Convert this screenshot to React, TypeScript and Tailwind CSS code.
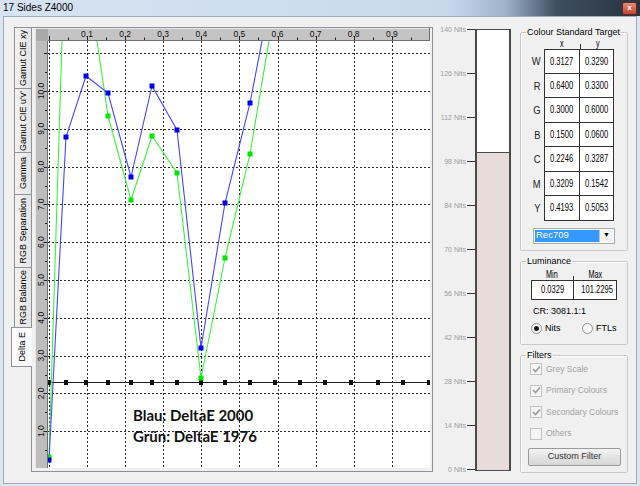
import React from "react";

const TABS = [
  { label: "Gamut CIE xy", h: "h-[62px]" },
  { label: "Gamut CIE u'v'", h: "h-[65px]" },
  { label: "Gamma", h: "h-[43px]" },
  { label: "RGB Separation", h: "h-[74px]" },
  { label: "RGB Balance", h: "h-[61px]" },
];

const TARGET = [
  ["W", "0.3127", "0.3290"],
  ["R", "0.6400", "0.3300"],
  ["G", "0.3000", "0.6000"],
  ["B", "0.1500", "0.0600"],
  ["C", "0.2246", "0.3287"],
  ["M", "0.3209", "0.1542"],
  ["Y", "0.4193", "0.5053"],
];

const NITS = [140, 126, 112, 98, 84, 70, 56, 42, 28, 14, 0];

const PX = [49, 66, 86, 108, 131, 152, 177, 201, 225, 250, 275, 300, 325, 351, 378, 403, 429];
const BLUE = [460, 137, 76, 93, 177, 86, 130, 348, 203, 103, -26];
const GREEN = [457, -87, -34, 116, 200, 136, 173, 378, 258, 154, 5];

const gx = (v: number) => 48.9 + v * 381;
const gy = (v: number) => 469 - v * 37.8;

function pts(ys: number[]) {
  return ys.map((y, i) => `${PX[i]},${y}`).join(" ");
}

// narrow text, the app uses a condensed face for numbers
function N({ children, right }: { children: React.ReactNode; right?: boolean }) {
  return (
    <span className={`inline-block shrink-0 whitespace-nowrap scale-x-[0.66] ${right ? "origin-right" : "origin-center"}`}>
      {children}
    </span>
  );
}

function Chart() {
  const xs = [0, 1, 2, 3, 4, 5, 6, 7, 8, 9];
  const ys = [1, 2, 3, 4, 5, 6, 7, 8, 9, 10, 11];
  return (
    <svg width={395} height={440} viewBox="35 28 395 440" className="block">
      <defs>
        <clipPath id="plot">
          <rect x={48} y={41} width={382} height={427} />
        </clipPath>
      </defs>
      {/* rulers */}
      <rect x={35} y={28} width={395} height={13} fill="#c4c4c4" />
      <rect x={35} y={28} width={13} height={440} fill="#bdbdbd" />
      <rect x={35} y={28} width={13} height={13} fill="#a9a9a9" />
      <line x1={35} y1={28.5} x2={430} y2={28.5} stroke="#e6e6e6" />
      <line x1={35.5} y1={28} x2={35.5} y2={468} stroke="#e6e6e6" />
      <line x1={48} y1={40.5} x2={430} y2={40.5} stroke="#6f6f6f" />
      <line x1={47.5} y1={41} x2={47.5} y2={468} stroke="#6f6f6f" />
      <line x1={429.5} y1={28} x2={429.5} y2={41} stroke="#6f6f6f" />
      <rect x={48} y={41} width={382} height={427} fill="#fff" />
      {xs.map((k) => (
        <g key={"xt" + k}>
          <line x1={Math.round(gx(k / 10)) + 0.5} y1={36} x2={Math.round(gx(k / 10)) + 0.5} y2={40} stroke="#222" />
          <line x1={Math.round(gx(k / 10 + 0.05)) + 0.5} y1={37.5} x2={Math.round(gx(k / 10 + 0.05)) + 0.5} y2={40} stroke="#222" />
          {k > 0 && (
            <text x={gx(k / 10)} y={37} fontSize={8.5} textAnchor="middle" fontFamily="Liberation Sans, sans-serif" fill="#111">
              {`0.${k}`}
            </text>
          )}
        </g>
      ))}
      {ys.map((k) => (
        <g key={"yt" + k}>
          <line x1={44} y1={Math.round(gy(k)) + 0.5} x2={47} y2={Math.round(gy(k)) + 0.5} stroke="#222" />
          <line x1={45} y1={Math.round(gy(k - 0.5)) + 0.5} x2={47} y2={Math.round(gy(k - 0.5)) + 0.5} stroke="#222" />
          {k <= 10 && (
            <text
              x={0}
              y={0}
              fontSize={8.5}
              textAnchor="middle"
              fontFamily="Liberation Sans, sans-serif"
              fill="#111"
              transform={`translate(44 ${gy(k)}) rotate(-90)`}
            >
              {`${k}.0`}
            </text>
          )}
        </g>
      ))}
      {/* grid */}
      <g stroke="#2a2a2a" strokeDasharray="2 2" shapeRendering="crispEdges">
        {xs.map((k) => (
          <line key={"gx" + k} x1={Math.round(gx(k / 10)) + 0.5} y1={41} x2={Math.round(gx(k / 10)) + 0.5} y2={468} />
        ))}
        {ys.map((k) => (
          <line key={"gy" + k} x1={48} y1={Math.round(gy(k)) + 0.5} x2={430} y2={Math.round(gy(k)) + 0.5} />
        ))}
      </g>
      <g clipPath="url(#plot)">
        <line x1={48} y1={382.5} x2={430} y2={382.5} stroke="#222" />
        {PX.map((x) => (
          <rect key={"k" + x} x={x - 2} y={380} width={4} height={5} fill="#111" />
        ))}
        <polyline points={pts(GREEN)} fill="none" stroke="#3cf43c" strokeWidth={1.1} />
        <polyline points={pts(BLUE)} fill="none" stroke="#4646ff" strokeWidth={1.1} />
        {GREEN.map((y, i) => (
          <rect key={"g" + i} x={PX[i] - 2.5} y={y - 2.5} width={5} height={5} fill="#00e600" />
        ))}
        {BLUE.map((y, i) => (
          <rect key={"b" + i} x={PX[i] - 2.5} y={y - 2.5} width={5} height={5} fill="#0000e8" />
        ))}
      </g>
      <text x={133} y={421} fontSize={15} fontWeight={700} fontFamily="Lato, sans-serif" fill="#111">
        Blau: DeltaE 2000
      </text>
      <text x={133} y={442} fontSize={15} fontWeight={700} fontFamily="Lato, sans-serif" fill="#111">
        Grün: DeltaE 1976
      </text>
    </svg>
  );
}

function Check({ on }: { on: boolean }) {
  return (
    <span className="flex h-[12px] w-[12px] items-center justify-center border border-[#c2c2c2] bg-[#f4f4f4]">
      {on && (
        <svg width="9" height="9" viewBox="0 0 9 9">
          <polyline points="1,4 3.5,6.5 8,1.5" fill="none" stroke="#9a9a9a" strokeWidth="1.6" />
        </svg>
      )}
    </span>
  );
}

function Radio({ on }: { on: boolean }) {
  return (
    <span className="flex h-[11px] w-[11px] items-center justify-center rounded-full border border-[#8e8f8f] bg-[#f6f6f6]">
      {on && <span className="h-[5px] w-[5px] rounded-full bg-[#1a1a1a]" />}
    </span>
  );
}

export default function App() {
  const fill = (101.2295 / 140) * 440;
  return (
    <div className="flex h-[486px] w-[640px] flex-col overflow-hidden bg-[#dce6f2] font-['Liberation_Sans',sans-serif] text-[9px] text-black">
      <div className="flex h-[16px] items-center justify-between bg-[linear-gradient(to_right,#d6e3f2_0%,#c9d9ed_70%,#9fb2c8_79%,#3e4e61_87%,#29333f_100%)] pl-[3px] pr-[3px]">
        <span className="text-[10px] leading-none text-black">17 Sides Z4000</span>
        <span className="flex h-[13px] w-[15px] items-center justify-center rounded-[2px] border border-[#5b2a22] bg-[linear-gradient(#e38a78,#c4432f)] text-[8px] font-bold leading-none text-white">
          x
        </span>
      </div>
      <div className="mx-[3px] mb-[2px] flex flex-1 border border-[#9eaab8] bg-[#f0f0f0]">
        {/* tabs */}
        <div className="ml-[6px] mt-[10px] flex w-[21px] flex-col items-end">
          {TABS.map((t) => (
            <div
              key={t.label}
              className={`${t.h} flex w-[17px] items-center justify-center border border-r-0 border-[#8e9198] bg-[linear-gradient(to_right,#f2f2f2,#e4e4e4)] -mb-px`}
            >
              <span className="rotate-180 whitespace-nowrap text-[9px] leading-none [writing-mode:vertical-rl]">
                {t.label}
              </span>
            </div>
          ))}
          <div className="relative z-10 -mr-px flex h-[40px] w-[21px] items-center justify-center border border-r-0 border-[#8e9198] bg-[#fbfbfb]">
            <span className="rotate-180 whitespace-nowrap text-[9px] leading-none [writing-mode:vertical-rl]">
              Delta E
            </span>
          </div>
        </div>
        {/* pane */}
        <div className="mb-[11px] mt-[10px] flex w-[402px] border border-[#8e9198] pb-[3px] pl-[3px] pr-[2px]">
          <Chart />
        </div>
        {/* luminance bar */}
        <div className="flex w-[87px]">
          <div className="mt-[8px] flex h-[449px] w-[42px] flex-col justify-between">
            {NITS.map((n) => (
              <div key={n} className="flex h-[8px] items-center justify-end">
                <span className="mr-[1px] text-[7px] leading-none text-[#9c9c9c]">{n} Nits</span>
                <span className="h-px w-[8px] bg-[#333]" />
              </div>
            ))}
          </div>
          <div className="mt-[12px] flex h-[442px] w-[36px] flex-col justify-end border-x-2 border-y border-[#4a4a4a] bg-white">
            <div className="border-t border-[#4a4a4a] bg-[#e8dcdb]" style={{ height: fill }} />
          </div>
        </div>
        {/* right panel */}
        <div className="mt-[10px] flex w-[108px] flex-col">
          <fieldset className="h-[224px] rounded-[2px] border border-[#c9c9c9] shadow-[inset_1px_1px_0_#fff]">
            <legend className="ml-[5px] px-[1px] text-[9px] leading-[10px]">Colour Standard Target</legend>
            <div className="flex h-[12px] items-end pl-[23px] text-[11px] leading-none">
              <span className="flex w-[36px] justify-center self-center"><N>x</N></span>
              <span className="h-[5px] w-px bg-[#333]" />
              <span className="flex w-[33px] justify-center self-center"><N>y</N></span>
            </div>
            <div className="flex flex-col">
              {TARGET.map(([l, x, y], i) => (
                <div key={l} className="flex h-[24.5px]">
                  <span className="flex w-[23px] items-center justify-end pr-[4px] text-[11px] text-[#222] scale-x-[0.85] origin-right">
                    {l}
                  </span>
                  <span
                    className={`flex w-[36px] min-w-0 items-center justify-center border-x border-b border-[#333] bg-white text-[11.5px] ${i === 0 ? "border-t" : ""}`}
                  >
                    <N>{x}</N>
                  </span>
                  <span
                    className={`flex w-[34px] min-w-0 items-center justify-center border-r border-b border-[#333] bg-white text-[11.5px] ${i === 0 ? "border-t" : ""}`}
                  >
                    <N>{y}</N>
                  </span>
                </div>
              ))}
            </div>
            <div className="ml-[12px] mt-[7px] flex h-[16px] w-[82px] items-stretch border border-[#a5acb5] bg-white p-px">
              <span className="flex flex-1 items-center bg-[#3399ff] pl-[1px] text-[9.5px] text-white">Rec709</span>
              <span className="flex w-[14px] items-center justify-center border-l border-[#c5c5c5] bg-[#f2f2f2] text-[7px] text-black">▼</span>
            </div>
          </fieldset>
          <fieldset className="mt-[5px] h-[89px] rounded-[2px] border border-[#c9c9c9] shadow-[inset_1px_1px_0_#fff]">
            <legend className="ml-[5px] px-[1px] text-[9px] leading-[10px]">Luminance</legend>
            <div className="mt-[3px] flex h-[11px] items-end pl-[10px] text-[11px] leading-none">
              <span className="flex w-[42px] justify-center self-center"><N>Min</N></span>
              <span className="h-[4px] w-px bg-[#333]" />
              <span className="flex w-[42px] justify-center self-center"><N>Max</N></span>
            </div>
            <div className="ml-[10px] flex h-[20px] w-[86px] border border-[#333] bg-white text-[11.5px]">
              <span className="flex w-[42px] min-w-0 items-center justify-end border-r border-[#333] pr-[9px]"><N right>0.0329</N></span>
              <span className="flex min-w-0 flex-1 items-center justify-end pr-[3px]"><N right>101.2295</N></span>
            </div>
            <div className="ml-[12px] mt-[5px] text-[9px] leading-[12px]">CR: 3081.1:1</div>
            <div className="ml-[10px] mt-[6px] flex items-center text-[9px] leading-none">
              <Radio on />
              <span className="ml-[3px] w-[37px]">Nits</span>
              <Radio on={false} />
              <span className="ml-[3px]">FTLs</span>
            </div>
          </fieldset>
          <fieldset className="mt-[5px] h-[123px] rounded-[2px] border border-[#c9c9c9] shadow-[inset_1px_1px_0_#fff]">
            <legend className="ml-[5px] px-[1px] text-[9px] leading-[10px]">Filters</legend>
            <div className="flex flex-col gap-[9.5px] pl-[9px] pt-[3px] text-[8.5px] leading-none text-[#a3a3a3]">
              {[
                ["Grey Scale", true],
                ["Primary Colours", true],
                ["Secondary Colours", true],
                ["Others", false],
              ].map(([l, on]) => (
                <div key={l as string} className="flex items-center gap-[4px]">
                  <Check on={on as boolean} />
                  <span>{l as string}</span>
                </div>
              ))}
            </div>
            <div className="ml-[7px] mt-[8px] flex h-[18px] w-[93px] items-center justify-center rounded-[2px] border border-[#9a9a9a] bg-[linear-gradient(#f4f4f4,#e3e3e3_50%,#d8d8d8)] text-[9px] text-[#333]">
              Custom Filter
            </div>
          </fieldset>
        </div>
      </div>
    </div>
  );
}
